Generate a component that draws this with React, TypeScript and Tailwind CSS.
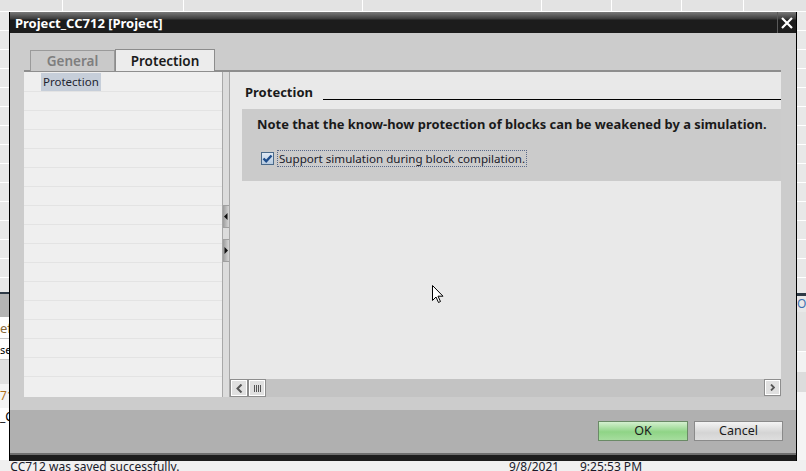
import React from "react";

const treeRows = Array.from({ length: 16 });
const topLines = [62, 183, 362, 541, 611, 681, 743];

const App = () => {
  return (
    <div className="relative w-[806px] h-[471px] overflow-hidden bg-[#f0f0f0] font-['Noto_Sans',sans-serif]">
      {/* Background app (behind the dialog) */}
      <div className="flex flex-col w-full h-full">
        <div className="relative h-[12px] bg-[#e3e3e3] border-b border-white">
          {topLines.map((x) => (
            <div key={x} className="absolute top-0 h-full w-px bg-white" style={{ left: x }} />
          ))}
        </div>
        <div className="flex flex-1">
          <div className="w-[9px] flex flex-col bg-[#e8e8e8]">
            <div className="h-[280px] bg-[repeating-linear-gradient(to_bottom,#e8e8e8_0px,#e8e8e8_18px,#ffffff_18px,#ffffff_19px)]" />
            <div className="h-[2px] bg-[#2e3a46]" />
            <div className="h-[24px] bg-[#b4b4b4] border-b border-white" />
            <div className="h-[20px] text-[13px] leading-[20px] text-[#8a6a3a] bg-white">ef</div>
            <div className="h-[22px] text-[11px] leading-[22px] text-black bg-white border-y border-[#c8c8c8]">se</div>
            <div className="h-[24px] bg-[#e0e0e0]" />
            <div className="h-[24px] text-[12px] leading-[24px] text-[#b07020] bg-[#f4f4f4]">71</div>
            <div className="flex-1 text-[12px] text-black bg-white">_C</div>
          </div>
          <div className="flex-1" />
          <div className="w-[10px] flex flex-col bg-[#e8e8e8]">
            <div className="h-[281px] bg-[repeating-linear-gradient(to_bottom,#e8e8e8_0px,#e8e8e8_18px,#ffffff_18px,#ffffff_19px)]" />
            <div className="h-[3px] bg-[#2e3a46]" />
            <div className="h-[16px] text-[12px] leading-[16px] text-[#4070b0] pl-[1px]">Op</div>
            <div className="h-[40px] bg-[#e2e2e2] border-b border-white" />
            <div className="h-[20px] bg-[#f2f2f2]" />
            <div className="h-[20px] bg-[#dcdcdc]" />
            <div className="flex-1 bg-[#f4f4f4]" />
          </div>
        </div>
        <div className="h-[11px] flex items-end text-[12px] leading-[14px] text-[#1a1a2a] bg-[#f0f0f0]">
          <span className="pl-[5px] w-[509px] -mb-[3px]">_CC712 was saved successfully.</span>
          <span className="w-[71px] -mb-[3px]">9/8/2021</span>
          <span className="-mb-[3px]">9:25:53 PM</span>
        </div>
      </div>

      {/* Dialog window */}
      <div className="absolute left-[9px] top-[12px] w-[788px] h-[449px] flex flex-col border-x border-black bg-[#cccccc]">
        {/* Title bar */}
        <div className="flex h-[21px] bg-[linear-gradient(to_bottom,#7a7a7a_0px,#3a3a3a_7px,#1c1c1c_8px,#1c1c1c_100%)]">
          <div className="flex-1 pl-[5px] text-[13px] font-bold leading-[22px] text-white">Project_CC712 [Project]</div>
          <div className="w-[19px] flex items-center justify-center border-l border-[#5a5a5a]">
            <svg width="12" height="12" viewBox="0 0 12 12">
              <path d="M1 1 L11 11 M11 1 L1 11" stroke="#ffffff" strokeWidth="2.2" />
            </svg>
          </div>
        </div>

        {/* Body */}
        <div className="flex flex-col flex-1 pt-[16px] pl-[14px] pr-[15px] pb-[13px]">
          {/* Tabs */}
          <div className="flex h-[22px] ml-[6px] -mb-px relative z-10">
            <div className="w-[85px] mt-[1px] border border-b-0 border-[#9a9a9a] bg-[#c9c9c9] text-[13.5px] font-semibold text-[#7e7e7e] text-center leading-[20px]">
              General
            </div>
            <div className="w-[100px] border border-b-0 border-[#8c8c8c] bg-[#ececec] text-[13.5px] font-semibold text-[#1a1a1a] text-center leading-[22px]">
              Protection
            </div>
          </div>

          {/* Panel */}
          <div className="flex flex-1 border-t-2 border-[#8e8e8e]">
            {/* Tree */}
            <div className="w-[198px] bg-[#efefef] pt-[1px]">
              {treeRows.map((_, i) => (
                <div key={i} className="h-[19px] border-b border-[#e3e3e3] pl-[17px] flex items-center">
                  {i === 0 && (
                    <span className="bg-[#c6ced9] px-[2px] h-[18px] text-[11.5px] leading-[18px] text-[#1e2430]">
                      Protection
                    </span>
                  )}
                </div>
              ))}
            </div>

            {/* Splitter */}
            <div className="w-[8px] flex flex-col bg-[#dcdcdc] border-x border-[#a8a8a8]">
              <div className="h-[133px]" />
              <div className="h-[23px] flex items-center justify-center bg-[linear-gradient(to_right,#9c9c9c,#d6d6d6)] border-y border-[#a0a0a0]">
                <svg width="4" height="7" viewBox="0 0 4 7">
                  <path d="M3.5 0 L0 3.5 L3.5 7 Z" fill="#111" />
                </svg>
              </div>
              <div className="h-[11px]" />
              <div className="h-[23px] flex items-center justify-center bg-[linear-gradient(to_right,#9c9c9c,#d6d6d6)] border-y border-[#a0a0a0]">
                <svg width="4" height="7" viewBox="0 0 4 7">
                  <path d="M0.5 0 L4 3.5 L0.5 7 Z" fill="#111" />
                </svg>
              </div>
            </div>

            {/* Right pane */}
            <div className="flex flex-col flex-1 bg-[#e9e9e9]">
              <div className="flex items-end h-[28px] pl-[15px]">
                <span className="text-[13px] font-bold text-[#1a1a1a] leading-[18px] mb-[-1px]">Protection</span>
                <div className="flex-1 h-px bg-black ml-[10px]" />
              </div>
              <div className="ml-[12px] mt-[9px] h-[72px] bg-[#cbcbcb] pl-[15px] pt-[5px]">
                <div className="text-[12.9px] font-bold text-[#1a1a1a] leading-[20px]">
                  Note that the know-how protection of blocks can be weakened by a simulation.
                </div>
                <div className="flex items-center mt-[16px] pl-[4px]">
                  <div className="w-[13px] h-[13px] border border-[#4a6a8a] bg-[linear-gradient(to_bottom,#dfe9f4,#b7cbe0)] flex items-center justify-center">
                    <svg width="11" height="11" viewBox="0 0 11 11">
                      <path d="M1.5 5.5 L4.2 8.3 L9.5 2.5" stroke="#1f4e8c" strokeWidth="2.4" fill="none" />
                    </svg>
                  </div>
                  <span className="ml-[3px] px-[1px] border border-dotted border-[#5a6a8a] text-[11.6px] leading-[15px] text-[#1a1a2a]">
                    Support simulation during block compilation.
                  </span>
                </div>
              </div>
              <div className="flex-1" />
              {/* Horizontal scrollbar */}
              <div className="flex h-[18px] bg-[#c3c3c3]">
                <div className="w-[18px] h-[18px] border border-[#8e8e8e] bg-[#e0e0e0] shadow-[inset_0_0_0_1px_#ffffff] flex items-center justify-center">
                  <svg width="7" height="9" viewBox="0 0 7 9">
                    <path d="M5.5 0.5 L1.5 4.5 L5.5 8.5" stroke="#555" strokeWidth="2" fill="none" />
                  </svg>
                </div>
                <div className="w-[18px] h-[18px] border border-[#8e8e8e] bg-[#e0e0e0] shadow-[inset_0_0_0_1px_#ffffff] flex items-center justify-center gap-[1px]">
                  <div className="w-px h-[7px] bg-[#555]" />
                  <div className="w-px h-[7px] bg-[#555]" />
                  <div className="w-px h-[7px] bg-[#555]" />
                  <div className="w-px h-[7px] bg-[#555]" />
                </div>
                <div className="flex-1" />
                <div className="w-[17px] h-[17px] border border-[#8e8e8e] bg-[#e0e0e0] shadow-[inset_0_0_0_1px_#ffffff] flex items-center justify-center">
                  <svg width="5" height="7" viewBox="0 0 5 7">
                    <path d="M1 0.5 L4 3.5 L1 6.5" stroke="#555" strokeWidth="1.8" fill="none" />
                  </svg>
                </div>
              </div>
            </div>
          </div>
        </div>

        {/* Footer */}
        <div className="h-[43px] bg-[#b0b0b0] flex justify-end items-start pt-[11px] pr-[13px] gap-[6px]">
          <button className="w-[90px] h-[20px] border border-[#6a8a66] bg-[linear-gradient(to_bottom,#d4f0cf,#8fd486_55%,#a6dd9e)] text-[12.5px] leading-[18px] text-[#1a1a1a]">
            OK
          </button>
          <button className="w-[89px] h-[20px] border border-[#8a8a8a] bg-[linear-gradient(to_bottom,#f4f4f4,#d4d4d4_60%,#dedede)] text-[12.5px] leading-[18px] text-[#1a1a1a]">
            Cancel
          </button>
        </div>
        <div className="h-[8px] bg-[#1c1c1c] border-t-2 border-[#6e6e6e]" />
      </div>

      {/* Mouse cursor */}
      <svg className="absolute left-[432px] top-[285px]" width="12" height="19" viewBox="0 0 12 19">
        <path d="M0.5 0.5 L0.5 15.5 L4 12 L6.5 17.5 L8.5 16.5 L6 11.2 L11 11.2 Z" fill="#ffffff" stroke="#000000" strokeWidth="1" />
      </svg>
    </div>
  );
};

export default App;
